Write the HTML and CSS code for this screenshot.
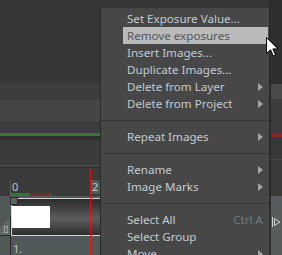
FILE: index.html
```html
<!DOCTYPE html>
<html>

<head>
    <title>Timeline menu</title>
    <meta name="viewport" content="width=device-width, initial-scale=1.0">
    <link rel="stylesheet" href="styles.css">
</head>

<body>
    <div class="screen">
        <div class="timeline">
            <div class="band band-top"></div>
            <div class="band band-a"></div>
            <div class="band band-b"></div>
            <div class="band band-c"></div>
            <div class="band band-green"></div>
            <div class="band band-d"></div>
            <div class="band band-e"></div>
            <div class="band band-rule"></div>
            <div class="ruler">
                <span class="tick tick-0"></span>
                <span class="label label-0">0</span>
                <span class="label label-2">2</span>
                <div class="range">
                    <span class="range-in"></span>
                    <span class="range-out"></span>
                </div>
            </div>
            <div class="track">
                <div class="clip">
                    <div class="thumb"></div>
                </div>
                <span class="handle"></span>
                <div class="wedge"><span class="pause">II</span></div>
                <span class="frame">1.</span>
                <span class="stem"></span>
            </div>
            <span class="playhead"></span>
        </div>
        <div class="side">
            <div class="band side-top"></div>
            <div class="band side-a"></div>
            <div class="band side-b"></div>
            <div class="band side-red"></div>
            <div class="band side-c"></div>
            <div class="band side-d"></div>
            <div class="side-track">
                <svg width="9" height="10" viewBox="0 0 9 10">
                    <path d="M0.5 0 V10" stroke="#cfd4d4" stroke-width="1" />
                    <path d="M2.5 1.5 L8 5 L2.5 8.5 Z" fill="none" stroke="#cfd4d4" stroke-width="1" />
                </svg>
            </div>
        </div>

        <div class="menu">
            <div class="item">Set Exposure Value...</div>
            <div class="item active">Remove exposures</div>
            <div class="item">Insert Images...</div>
            <div class="item">Duplicate Images...</div>
            <div class="item">Delete from Layer<span class="arrow"></span></div>
            <div class="item">Delete from Project<span class="arrow"></span></div>
            <div class="sep"></div>
            <div class="item">Repeat Images<span class="arrow"></span></div>
            <div class="sep"></div>
            <div class="item">Rename<span class="arrow"></span></div>
            <div class="item">Image Marks<span class="arrow"></span></div>
            <div class="sep"></div>
            <div class="item">Select All<span class="shortcut">Ctrl A</span></div>
            <div class="item">Select Group</div>
            <div class="item">Move<span class="arrow"></span></div>
        </div>

        <svg class="cursor" width="13" height="20" viewBox="0 0 13 20">
            <path d="M0.5 0.5 L0.5 16.5 L4.5 12.7 L7.3 19 L9.6 18 L6.9 11.9 L12 11.9 Z" fill="#ffffff" stroke="#000000" stroke-width="1" />
        </svg>
    </div>
</body>

</html>
```

FILE: styles.css
```css
* {
    box-sizing: border-box;
    margin: 0;
    padding: 0;
}

body {
    background: #363636;
    overflow: hidden;
    font-family: "Noto Sans", "Open Sans", sans-serif;
}

.screen {
    position: relative;
    display: flex;
    width: 282px;
    height: 255px;
    overflow: hidden;
}

.timeline {
    position: relative;
    flex: 1;
    display: flex;
    flex-direction: column;
}

.band {
    flex: none;
}

.band-top { height: 83px; background: #363636; }
.band-a { height: 17px; background: #3d3d3d; }
.band-b { height: 21px; background: #454545; }
.band-c { height: 12px; background: #3d3d3d; }
.band-green { height: 3px; background: #2f7a30; }
.band-d { height: 4px; background: #2f2f2f; }
.band-e { height: 25px; background: #3b3b3b; }

.band-rule {
    height: 3px;
    background: #3f3f3f;
    border-top: 1px solid #4b4b4b;
    border-bottom: 1px solid #2e2e2e;
}

.ruler {
    position: relative;
    height: 28px;
    background: #3a3a3a;
}

.tick-0 {
    position: absolute;
    left: 10px;
    top: 12px;
    width: 1px;
    height: 16px;
    background: #5a5a5a;
}

.label {
    position: absolute;
    top: 12px;
    font-size: 11px;
    line-height: 14px;
    color: #c4c8c8;
}

.label-0 { left: 12px; }

.label-2 {
    left: 91px;
    width: 9px;
    padding-left: 1px;
    background: #4b5b5a;
}

.range {
    position: absolute;
    left: 11px;
    top: 25px;
    display: flex;
    height: 3px;
    border-right: 1px solid #5c5c5c;
}

.range-in { width: 19px; background: #2f7a30; }
.range-out { width: 20px; background: #772828; }

.track {
    position: relative;
    flex: 1;
    background: #505858;
}

.clip {
    margin: 2px 0 0 11px;
    height: 38px;
    border: 1px solid #d8d8d8;
    border-right: none;
    background: linear-gradient(#2c2c2c, #5c5c5c 55%, #2e2e2e);
}

.thumb {
    width: 38px;
    height: 22px;
    margin-top: 7px;
    background: #ffffff;
}

.handle {
    position: absolute;
    left: 10px;
    top: 1px;
    width: 8px;
    height: 8px;
    background: #5e6464;
    border: 1px solid #262626;
}

.wedge {
    position: absolute;
    left: 0;
    top: 20px;
    width: 11px;
    height: 20px;
    background: #5d6565;
    border: 1px solid #2a2a2a;
    border-left: none;
    clip-path: polygon(100% 0, 100% 100%, 0 100%, 0 60%);
}

.pause {
    position: absolute;
    left: 3px;
    top: 9px;
    font-size: 8px;
    line-height: 8px;
    color: #b8bcbc;
}

.frame {
    position: absolute;
    left: 13px;
    top: 47px;
    font-size: 11px;
    line-height: 12px;
    color: #c0c8c8;
}

.stem {
    position: absolute;
    left: 10px;
    top: 40px;
    width: 1px;
    height: 19px;
    background: #2c2c2c;
}

.playhead {
    position: absolute;
    left: 90px;
    top: 169px;
    width: 1px;
    height: 86px;
    background: #e01414;
}

.side {
    width: 13px;
    border-left: 2px solid #2b2b2b;
    display: flex;
    flex-direction: column;
}

.side-top { height: 84px; background: #2f2f2f; }
.side-a { height: 15px; background: #4a4a4a; }
.side-b { height: 35px; background: #3c3c3c; }
.side-red { height: 3px; background: #8a2828; }
.side-c { height: 23px; background: #383838; border-bottom: 1px solid #4a4a4a; }
.side-d { height: 36px; background: #3b3b3b; }

.side-track {
    flex: 1;
    background: #575d5d;
    padding: 21px 0 0 1px;
}

.side-track svg {
    display: block;
}

.menu {
    position: absolute;
    left: 100px;
    top: 8px;
    width: 169px;
    height: 260px;
    padding-top: 2px;
    background: #474747;
    border-left: 1px solid #2c2c2c;
}

.item {
    display: flex;
    align-items: center;
    justify-content: space-between;
    height: 17px;
    margin: 0 1px 0 22px;
    padding: 0 5px 0 4px;
    font-size: 11.6px;
    color: #c3ccd3;
    white-space: nowrap;
}

.item.active {
    background: #bababa;
    color: #4f5862;
}

.arrow {
    width: 0;
    height: 0;
    border-left: 5px solid #a4a4a4;
    border-top: 4.5px solid transparent;
    border-bottom: 4.5px solid transparent;
}

.shortcut {
    color: #6c7f84;
}

.sep {
    height: 16px;
    padding-top: 8px;
}

.sep::before {
    content: "";
    display: block;
    height: 1px;
    background: #363636;
}

.cursor {
    position: absolute;
    left: 266px;
    top: 37px;
}
```
